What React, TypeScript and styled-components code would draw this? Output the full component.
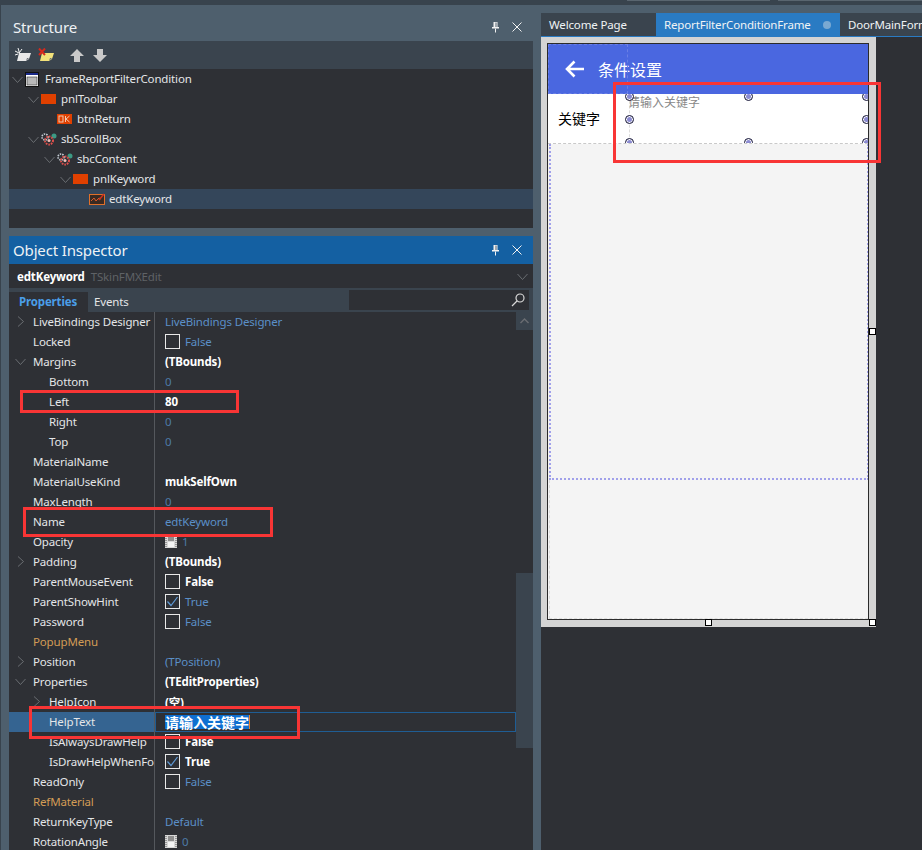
import React from "react";
import styled, { createGlobalStyle } from "styled-components";

const UI = `"Noto Sans", "Noto Sans CJK SC", sans-serif`;

const Global = createGlobalStyle`
  html, body { margin: 0; padding: 0; background: #4e5f6d; }
  body { font-family: ${UI}; font-size: 11.5px; letter-spacing: -0.15px; }
  * { box-sizing: border-box; }
`;

const Page = styled.div`
  position: relative;
  width: 922px;
  height: 850px;
  overflow: hidden;
  background: #4e5f6d;
  border-left: 1px solid #38434d;
  display: flex;
  flex-direction: column;
`;
const TopStrip = styled.div`
  height: 5px;
  flex: none;
  background: #38434d;
  display: flex;
  align-items: flex-start;
  padding-left: 626px;
  gap: 8px;
`;
const TopSegment = styled.div<{ $w: number }>`
  width: ${(p) => p.$w}px;
  height: 1px;
  background: #59656f;
`;
const Columns = styled.div`
  flex: 1;
  min-height: 0;
  display: grid;
  grid-template-columns: 540px 1fr;
`;
const LeftColumn = styled.div`
  padding: 0 8px 0 8px;
  display: flex;
  flex-direction: column;
  min-height: 0;
`;
const PanelTitle = styled.div<{ $active?: boolean }>`
  height: ${(p) => (p.$active ? 28 : 36)}px;
  flex: none;
  padding: ${(p) => (p.$active ? "0 0 0 4px" : "8px 0 0 4px")};
  display: flex;
  align-items: center;
  justify-content: space-between;
  background: ${(p) => (p.$active ? "#1460a2" : "transparent")};
  color: #eef2f5;
  font-size: 15px;
  letter-spacing: -0.15px;
`;
const TitleButtons = styled.div`
  display: flex;
  align-items: center;
  gap: 12px;
  padding-right: 11px;
`;
const Toolbar = styled.div`
  height: 28px;
  flex: none;
  background: #3a444e;
  display: flex;
  align-items: center;
  padding-left: 6px;
`;
const ToolIcon = styled.svg<{ $gap?: number }>`
  display: block;
  margin-right: ${(p) => p.$gap ?? 0}px;
`;
const Tree = styled.div`
  height: 159px;
  flex: none;
  background: #2e3035;
  margin-bottom: 8px;
`;
const TreeRow = styled.div<{ $level: number; $selected?: boolean }>`
  height: 20px;
  display: flex;
  align-items: center;
  padding-left: ${(p) => p.$level * 16 + 3}px;
  color: #e4e6e8;
  background: ${(p) => (p.$selected ? "#34465a" : "transparent")};
  white-space: nowrap;
`;
const Expander = styled.span`
  width: 13px;
  flex: none;
  display: flex;
  align-items: center;
`;
const TreeLabel = styled.span`
  margin-top: -2px;
`;
const NodeIcon = styled.svg<{ $gap: number }>`
  flex: none;
  margin-right: ${(p) => p.$gap}px;
`;
const Combo = styled.div`
  height: 24px;
  flex: none;
  background: #2e3035;
  display: flex;
  align-items: center;
  padding: 0 5px 0 8px;
  gap: 6px;
  color: #fff;
  font-weight: 700;
`;
const ComboType = styled.span`
  color: #5f6266;
  font-weight: 400;
  flex: 1;
`;
const TabStrip = styled.div`
  height: 24px;
  flex: none;
  background: #3a444e;
  padding-top: 4px;
  display: flex;
  position: relative;
`;
const InspectorTab = styled.div<{ $active?: boolean }>`
  width: ${(p) => (p.$active ? 79 : 40)}px;
  padding-left: ${(p) => (p.$active ? 10 : 6)}px;
  background: ${(p) => (p.$active ? "#2e3035" : "transparent")};
  color: ${(p) => (p.$active ? "#4a9ee8" : "#e4e6e8")};
  font-weight: ${(p) => (p.$active ? 700 : 400)};
  line-height: 20px;
`;
const SearchBox = styled.div`
  margin: -2px 4px 2px auto;
  width: 180px;
  background: #2e3035;
  display: flex;
  align-items: center;
  justify-content: flex-end;
  padding-right: 4px;
`;
const GridArea = styled.div`
  flex: 1;
  min-height: 0;
  display: flex;
  background: #2e3035;
  overflow: hidden;
`;
const Grid = styled.div`
  width: 507px;
  flex: none;
`;
const PropRow = styled.div`
  height: 20px;
  display: grid;
  grid-template-columns: 146px 1fr;
`;
const NameCell = styled.div<{ $child?: boolean; $tone?: string; $selected?: boolean }>`
  position: relative;
  padding-left: ${(p) => (p.$child ? 40 : 24)}px;
  line-height: 20px;
  overflow: hidden;
  white-space: nowrap;
  color: ${(p) => (p.$tone === "orange" ? "#d39c55" : "#e4e6e8")};
  background: ${(p) => (p.$selected ? "#356491" : "transparent")};
  border-right: 1px solid #55585d;
`;
const RowChevron = styled.span<{ $child?: boolean }>`
  position: absolute;
  display: flex;
  top: 4px;
  left: ${(p) => (p.$child ? 22 : 6)}px;
`;
const ValueCell = styled.div<{ $kind?: string; $selected?: boolean }>`
  padding: 0 0 1px 10px;
  display: flex;
  align-items: center;
  gap: 5px;
  white-space: nowrap;
  color: ${(p) =>
    p.$kind === "bold" || p.$kind === "strong"
      ? "#fff"
      : p.$kind === "dim"
        ? "#4d7aa6"
        : "#5b8fc7"};
  font-weight: ${(p) => (p.$kind === "bold" || p.$kind === "strong" ? 700 : 400)};
  border: ${(p) => (p.$selected ? "1px solid #1f5d94" : "none")};
`;
const CheckBox = styled.span`
  width: 15px;
  height: 15px;
  flex: none;
  border: 1px solid #e8e8e8;
  display: flex;
  align-items: center;
  justify-content: center;
`;
const SelectedText = styled.span`
  background: #0f6fd0;
  color: #fff;
  font-family: "Noto Sans CJK SC", sans-serif;
  font-weight: 700;
  font-size: 14px;
  letter-spacing: 0;
  line-height: 14px;
  margin-left: -1px;
  border-right: 1px solid #e8842c;
`;
const Scrollbar = styled.div`
  width: 17px;
  flex: none;
  display: flex;
  flex-direction: column;
`;
const ScrollButton = styled.div`
  height: 18px;
  background: #3a444e;
  display: flex;
  align-items: center;
  justify-content: center;
`;
const ScrollTrack = styled.div`
  height: 243px;
`;
const ScrollThumb = styled.div`
  height: 175px;
  background: #3a444e;
`;

const RightColumn = styled.div`
  padding-top: 8px;
  display: flex;
  flex-direction: column;
  min-height: 0;
`;
const DocTabs = styled.div`
  height: 24px;
  flex: none;
  display: flex;
  border-bottom: 1px solid #2a7bc3;
  overflow: hidden;
  white-space: nowrap;
`;
const DocTab = styled.div<{ $active?: boolean; $w: number }>`
  width: ${(p) => p.$w}px;
  flex: none;
  padding: 0 9px 0 8px;
  line-height: 23px;
  background: ${(p) => (p.$active ? "#2a7bc3" : "#3a444e")};
  color: #f0f3f5;
  display: flex;
  justify-content: space-between;
  align-items: center;
`;
const ModifiedDot = styled.span`
  width: 8px;
  height: 8px;
  border-radius: 50%;
  background: #7aa9d2;
`;
const Workspace = styled.div`
  flex: 1;
  min-height: 0;
  background: #2e3035;
`;
const Canvas = styled.div`
  position: relative;
  width: 335px;
  height: 590px;
  background: #d4d4d4;
  padding: 6px 7px 7px 6px;
`;
const SizeHandle = styled.span<{ $x: number; $y: number }>`
  position: absolute;
  left: ${(p) => p.$x}px;
  top: ${(p) => p.$y}px;
  width: 7px;
  height: 7px;
  background: #fff;
  border: 1px solid #000;
`;
const Frame = styled.div`
  height: 100%;
  border: 1px solid #2b2b2b;
  background: #f4f4f4;
  display: flex;
  flex-direction: column;
  overflow: hidden;
`;
const AppHeader = styled.div`
  position: relative;
  height: 50px;
  flex: none;
  background: #4a67e0;
  display: flex;
  align-items: center;
  padding-left: 17px;
  gap: 13px;
  color: #fff;
  font-size: 16px;
  letter-spacing: 0;
  font-family: "Noto Sans CJK SC", sans-serif;
`;
const BackOutline = styled.div`
  position: absolute;
  left: 0;
  top: 0;
  width: 80px;
  height: 100%;
  border: 1px dashed #6a7fe5;
`;
const KeywordRow = styled.div`
  height: 50px;
  flex: none;
  background: #fff;
  display: flex;
  overflow: hidden;
  border-bottom: 1px dashed #c9c9c9;
  color: #000;
`;
const KeywordLabel = styled.div`
  width: 81px;
  flex: none;
  padding-left: 10px;
  font-size: 14px;
  letter-spacing: 0;
  line-height: 49px;
  font-family: "Noto Sans CJK SC", sans-serif;
`;
const EditBox = styled.div`
  position: relative;
  flex: 1;
  margin: 2px 1px 1px 0;
  border-left: 1px dashed #ddd;
`;
const HelpHint = styled.div`
  margin: 0 0 0 -2px;
  font-size: 12px;
  letter-spacing: 0;
  line-height: 12px;
  color: #888;
  font-family: "Noto Sans CJK SC", sans-serif;
`;
const EditHandle = styled.span<{ $x: number; $y: number }>`
  position: absolute;
  left: ${(p) => p.$x}%;
  top: ${(p) => p.$y}%;
  width: 9px;
  height: 9px;
  margin: -4px 0 0 -5px;
  border-radius: 50%;
  background: #8b8bd2;
  border: 1px solid #24243a;
  box-shadow: inset 0 0 0 1px #fff;
`;
const ScrollBoxArea = styled.div`
  height: 336px;
  flex: none;
  margin: 0 -1px 0 1px;
  border: 2px dotted #a0a0ea;
  border-top: none;
`;
const FrameRest = styled.div`
  flex: 1;
  margin-left: 1px;
  border-left: 1px dashed #dedede;
  border-bottom: 1px dashed #dedede;
`;
const Mark = styled.div<{ $x: number; $y: number; $w: number; $h: number }>`
  position: absolute;
  left: ${(p) => p.$x}px;
  top: ${(p) => p.$y}px;
  width: ${(p) => p.$w}px;
  height: ${(p) => p.$h}px;
  border: 3px solid #f83535;
  pointer-events: none;
`;

const Chevron = ({ open = true }: { open?: boolean }) => (
  <svg width="11" height="11" viewBox="0 0 11 11" fill="none" stroke="#6a6d72" strokeWidth="1">
    {open ? <path d="M0.5 3 L5.5 8.5 L10.5 3" /> : <path d="M3 0.5 L8.5 5.5 L3 10.5" />}
  </svg>
);

const Pin = () => (
  <svg width="9" height="12" viewBox="0 0 9 12" fill="none">
    <path d="M2.5 1 H6.5 V6 H8 V7.5 H1 V6 H2.5 Z" fill="#f2f2f2" />
    <path d="M4.5 7.5 V11.5" stroke="#f2f2f2" />
    <path d="M5 1.5 V6" stroke="#4e5f6d" />
  </svg>
);
const CloseX = () => (
  <svg width="10" height="10" viewBox="0 0 10 10" stroke="#f2f2f2" strokeWidth="1">
    <path d="M0.5 0.5 L9.5 9.5 M9.5 0.5 L0.5 9.5" />
  </svg>
);
const Check = () => (
  <svg width="13" height="11" viewBox="0 0 13 11" fill="none" stroke="#5f9ad6" strokeWidth="1.2">
    <path d="M1.5 5.5 L5 9.5 L11.5 1" />
  </svg>
);
const Film = () => (
  <svg width="12" height="13" viewBox="0 0 12 13">
    <rect width="12" height="13" fill="#d8d8d8" />
    <rect x="3" y="1" width="6" height="5" fill="#8e8e8e" />
    <rect x="3" y="7" width="6" height="5" fill="#f4f4f4" />
    <path d="M1 1 V12 M11 1 V12" stroke="#555" strokeDasharray="1 1" />
  </svg>
);

type IconKind = "window" | "panel" | "button" | "gears" | "edit";
const NodeGlyph = ({ kind }: { kind: IconKind }) => {
  if (kind === "window")
    return (
      <NodeIcon $gap={6} width="14" height="15" viewBox="0 0 14 15">
        <rect x="0.5" y="0.5" width="13" height="14" fill="#fff" stroke="#111" />
        <rect x="1" y="1" width="12" height="2" fill="#1a2a8a" />
        <rect x="2" y="5" width="10" height="8" fill="#b8b8b8" stroke="#333" strokeWidth="0.6" />
      </NodeIcon>
    );
  if (kind === "panel")
    return (
      <NodeIcon $gap={5} width="15" height="10" viewBox="0 0 15 10">
        <rect width="15" height="10" fill="#e04000" />
      </NodeIcon>
    );
  if (kind === "button")
    return (
      <NodeIcon $gap={5} width="15" height="10" viewBox="0 0 15 10">
        <rect width="15" height="10" fill="#e04000" />
        <rect x="2" y="2" width="4" height="6" fill="none" stroke="#f2c8b0" />
        <path d="M8.5 2 V8 M12.5 2 L9 5 L12.5 8" fill="none" stroke="#f2c8b0" />
      </NodeIcon>
    );
  if (kind === "gears")
    return (
      <NodeIcon $gap={4} width="16" height="14" viewBox="0 0 16 14">
        <circle cx="4" cy="5" r="3" fill="none" stroke="#c5ccd4" strokeWidth="1.6" strokeDasharray="1.5 1" />
        <circle cx="13" cy="4" r="2.5" fill="#3c9a84" />
        <circle cx="8" cy="8.5" r="4" fill="none" stroke="#e0504c" strokeWidth="2" strokeDasharray="1.6 1" />
        <circle cx="8" cy="8.5" r="1.5" fill="#f3c0b8" />
      </NodeIcon>
    );
  return (
    <NodeIcon $gap={4} width="16" height="12" viewBox="0 0 16 12">
      <rect x="0.5" y="1.5" width="15" height="10" fill="#3a2a22" stroke="#e0702a" />
      <path d="M2 8 L5 5 L7 8 L10 5 L12 6" fill="none" stroke="#d85a2a" />
      <path d="M10 7 L15 1" stroke="#c83020" strokeWidth="1.5" />
    </NodeIcon>
  );
};

const treeItems: { label: string; level: number; icon: IconKind; open: boolean; selected?: boolean }[] = [
  { label: "FrameReportFilterCondition", level: 0, icon: "window", open: true },
  { label: "pnlToolbar", level: 1, icon: "panel", open: true },
  { label: "btnReturn", level: 2, icon: "button", open: false },
  { label: "sbScrollBox", level: 1, icon: "gears", open: true },
  { label: "sbcContent", level: 2, icon: "gears", open: true },
  { label: "pnlKeyword", level: 3, icon: "panel", open: true },
  { label: "edtKeyword", level: 4, icon: "edit", open: false, selected: true },
];

type Prop = {
  name: string;
  value?: string;
  kind?: "link" | "bold" | "strong" | "dim";
  child?: boolean;
  tone?: string;
  arrow?: "open" | "closed";
  check?: boolean;
  checked?: boolean;
  film?: boolean;
  selected?: boolean;
};

const props: Prop[] = [
  { name: "LiveBindings Designer", value: "LiveBindings Designer", arrow: "closed" },
  { name: "Locked", value: "False", check: true },
  { name: "Margins", value: "(TBounds)", kind: "bold", arrow: "open" },
  { name: "Bottom", value: "0", kind: "dim", child: true },
  { name: "Left", value: "80", kind: "bold", child: true },
  { name: "Right", value: "0", kind: "dim", child: true },
  { name: "Top", value: "0", kind: "dim", child: true },
  { name: "MaterialName" },
  { name: "MaterialUseKind", value: "mukSelfOwn", kind: "bold" },
  { name: "MaxLength", value: "0", kind: "dim" },
  { name: "Name", value: "edtKeyword" },
  { name: "Opacity", value: "1", kind: "dim", film: true },
  { name: "Padding", value: "(TBounds)", kind: "bold", arrow: "closed" },
  { name: "ParentMouseEvent", value: "False", kind: "bold", check: true },
  { name: "ParentShowHint", value: "True", check: true, checked: true },
  { name: "Password", value: "False", check: true },
  { name: "PopupMenu", tone: "orange" },
  { name: "Position", value: "(TPosition)", arrow: "closed" },
  { name: "Properties", value: "(TEditProperties)", kind: "bold", arrow: "open" },
  { name: "HelpIcon", value: "(空)", kind: "bold", child: true, arrow: "closed" },
  { name: "HelpText", value: "请输入关键字", child: true, selected: true },
  { name: "IsAlwaysDrawHelp", value: "False", kind: "bold", child: true, check: true },
  { name: "IsDrawHelpWhenFo", value: "True", kind: "bold", child: true, check: true, checked: true },
  { name: "ReadOnly", value: "False", check: true },
  { name: "RefMaterial", tone: "orange" },
  { name: "ReturnKeyType", value: "Default" },
  { name: "RotationAngle", value: "0", kind: "dim", film: true },
];

const handles = [
  [0, 0], [50, 0], [100, 0],
  [0, 50], [100, 50],
  [0, 100], [50, 100], [100, 100],
];

export default function App() {
  return (
    <Page>
      <Global />
      <TopStrip>
        <TopSegment $w={143} />
        <TopSegment $w={144} />
      </TopStrip>
      <Columns>
        <LeftColumn>
          <PanelTitle>
            <span>Structure</span>
            <TitleButtons>
              <Pin />
              <CloseX />
            </TitleButtons>
          </PanelTitle>
          <Toolbar>
            <ToolIcon $gap={7} width="16" height="14" viewBox="0 0 16 14">
              <path d="M4 5 H16 L14 11 L11 13 H2 Z" fill="#e8e8e8" />
              <path d="M11 13 L12 10 H14 Z" fill="#6c7278" />
              <path d="M3 0 L4.5 5 M0 3 L4 5 M7 1 L4.5 4.5 M0 7 L3 6" stroke="#f4f4f4" />
            </ToolIcon>
            <ToolIcon $gap={16} width="16" height="14" viewBox="0 0 16 14">
              <path d="M4 5 H16 L14 11 L11 13 H2 Z" fill="#f2e27a" />
              <path d="M11 13 L12 10 H14 Z" fill="#6c7278" />
              <path d="M1 0.5 L7 7 M7 0.5 L1 7" stroke="#d8281c" strokeWidth="2" />
            </ToolIcon>
            <ToolIcon $gap={9} width="14" height="13" viewBox="0 0 14 13">
              <path d="M7 0 L14 7 H10 V13 H4 V7 H0 Z" fill="#c9c9c9" />
            </ToolIcon>
            <ToolIcon width="14" height="13" viewBox="0 0 14 13">
              <path d="M7 13 L14 6 H10 V0 H4 V6 H0 Z" fill="#c9c9c9" />
            </ToolIcon>
          </Toolbar>
          <Tree>
            {treeItems.map((t) => (
              <TreeRow key={t.label} $level={t.level} $selected={t.selected}>
                <Expander>{t.open && <Chevron />}</Expander>
                <NodeGlyph kind={t.icon} />
                <TreeLabel>{t.label}</TreeLabel>
              </TreeRow>
            ))}
          </Tree>
          <PanelTitle $active>
            <span>Object Inspector</span>
            <TitleButtons>
              <Pin />
              <CloseX />
            </TitleButtons>
          </PanelTitle>
          <Combo>
            <span>edtKeyword</span>
            <ComboType>TSkinFMXEdit</ComboType>
            <Chevron />
          </Combo>
          <TabStrip>
            <InspectorTab $active>Properties</InspectorTab>
            <InspectorTab>Events</InspectorTab>
            <SearchBox>
              <svg width="14" height="14" viewBox="0 0 14 14" fill="none" stroke="#d8d8d8" strokeWidth="1.2">
                <circle cx="9" cy="5" r="4" />
                <path d="M6 8 L1 13" />
              </svg>
            </SearchBox>
          </TabStrip>
          <GridArea>
            <Grid>
              {props.map((p) => (
                <PropRow key={p.name}>
                  <NameCell $child={p.child} $tone={p.tone} $selected={p.selected}>
                    {p.arrow && (
                      <RowChevron $child={p.child}>
                        <Chevron open={p.arrow === "open"} />
                      </RowChevron>
                    )}
                    {p.name}
                  </NameCell>
                  <ValueCell $kind={p.kind} $selected={p.selected}>
                    {p.check && <CheckBox>{p.checked && <Check />}</CheckBox>}
                    {p.film && <Film />}
                    {p.selected ? <SelectedText>{p.value}</SelectedText> : p.value}
                  </ValueCell>
                </PropRow>
              ))}
            </Grid>
            <Scrollbar>
              <ScrollButton>
                <svg width="9" height="6" viewBox="0 0 9 6" fill="none" stroke="#6a6d72" strokeWidth="1.4">
                  <path d="M0.5 5 L4.5 1 L8.5 5" />
                </svg>
              </ScrollButton>
              <ScrollTrack />
              <ScrollThumb />
            </Scrollbar>
          </GridArea>
        </LeftColumn>
        <RightColumn>
          <DocTabs>
            <DocTab $w={115}>Welcome Page</DocTab>
            <DocTab $w={184} $active>
              ReportFilterConditionFrame
              <ModifiedDot />
            </DocTab>
            <DocTab $w={120}>DoorMainForm</DocTab>
          </DocTabs>
          <Workspace>
            <Canvas>
              <Frame>
                <AppHeader>
                  <BackOutline />
                  <svg width="20" height="18" viewBox="0 0 20 18" fill="none" stroke="#fff" strokeWidth="2.6">
                    <path d="M19 9 H2 M9.5 1.5 L2 9 L9.5 16.5" />
                  </svg>
                  <span>条件设置</span>
                </AppHeader>
                <KeywordRow>
                  <KeywordLabel>关键字</KeywordLabel>
                  <EditBox>
                    <HelpHint>请输入关键字</HelpHint>
                    {handles.map(([x, y]) => (
                      <EditHandle key={`${x}-${y}`} $x={x} $y={y} />
                    ))}
                  </EditBox>
                </KeywordRow>
                <ScrollBoxArea />
                <FrameRest />
              </Frame>
              <SizeHandle $x={328} $y={291} />
              <SizeHandle $x={164} $y={582} />
              <SizeHandle $x={328} $y={582} />
            </Canvas>
          </Workspace>
        </RightColumn>
      </Columns>
      <Mark $x={19} $y={390} $w={219} $h={23} />
      <Mark $x={22} $y={507} $w={250} $h={30} />
      <Mark $x={28} $y={706} $w={271} $h={33} />
      <Mark $x={612} $y={82} $w={268} $h={81} />
    </Page>
  );
}
